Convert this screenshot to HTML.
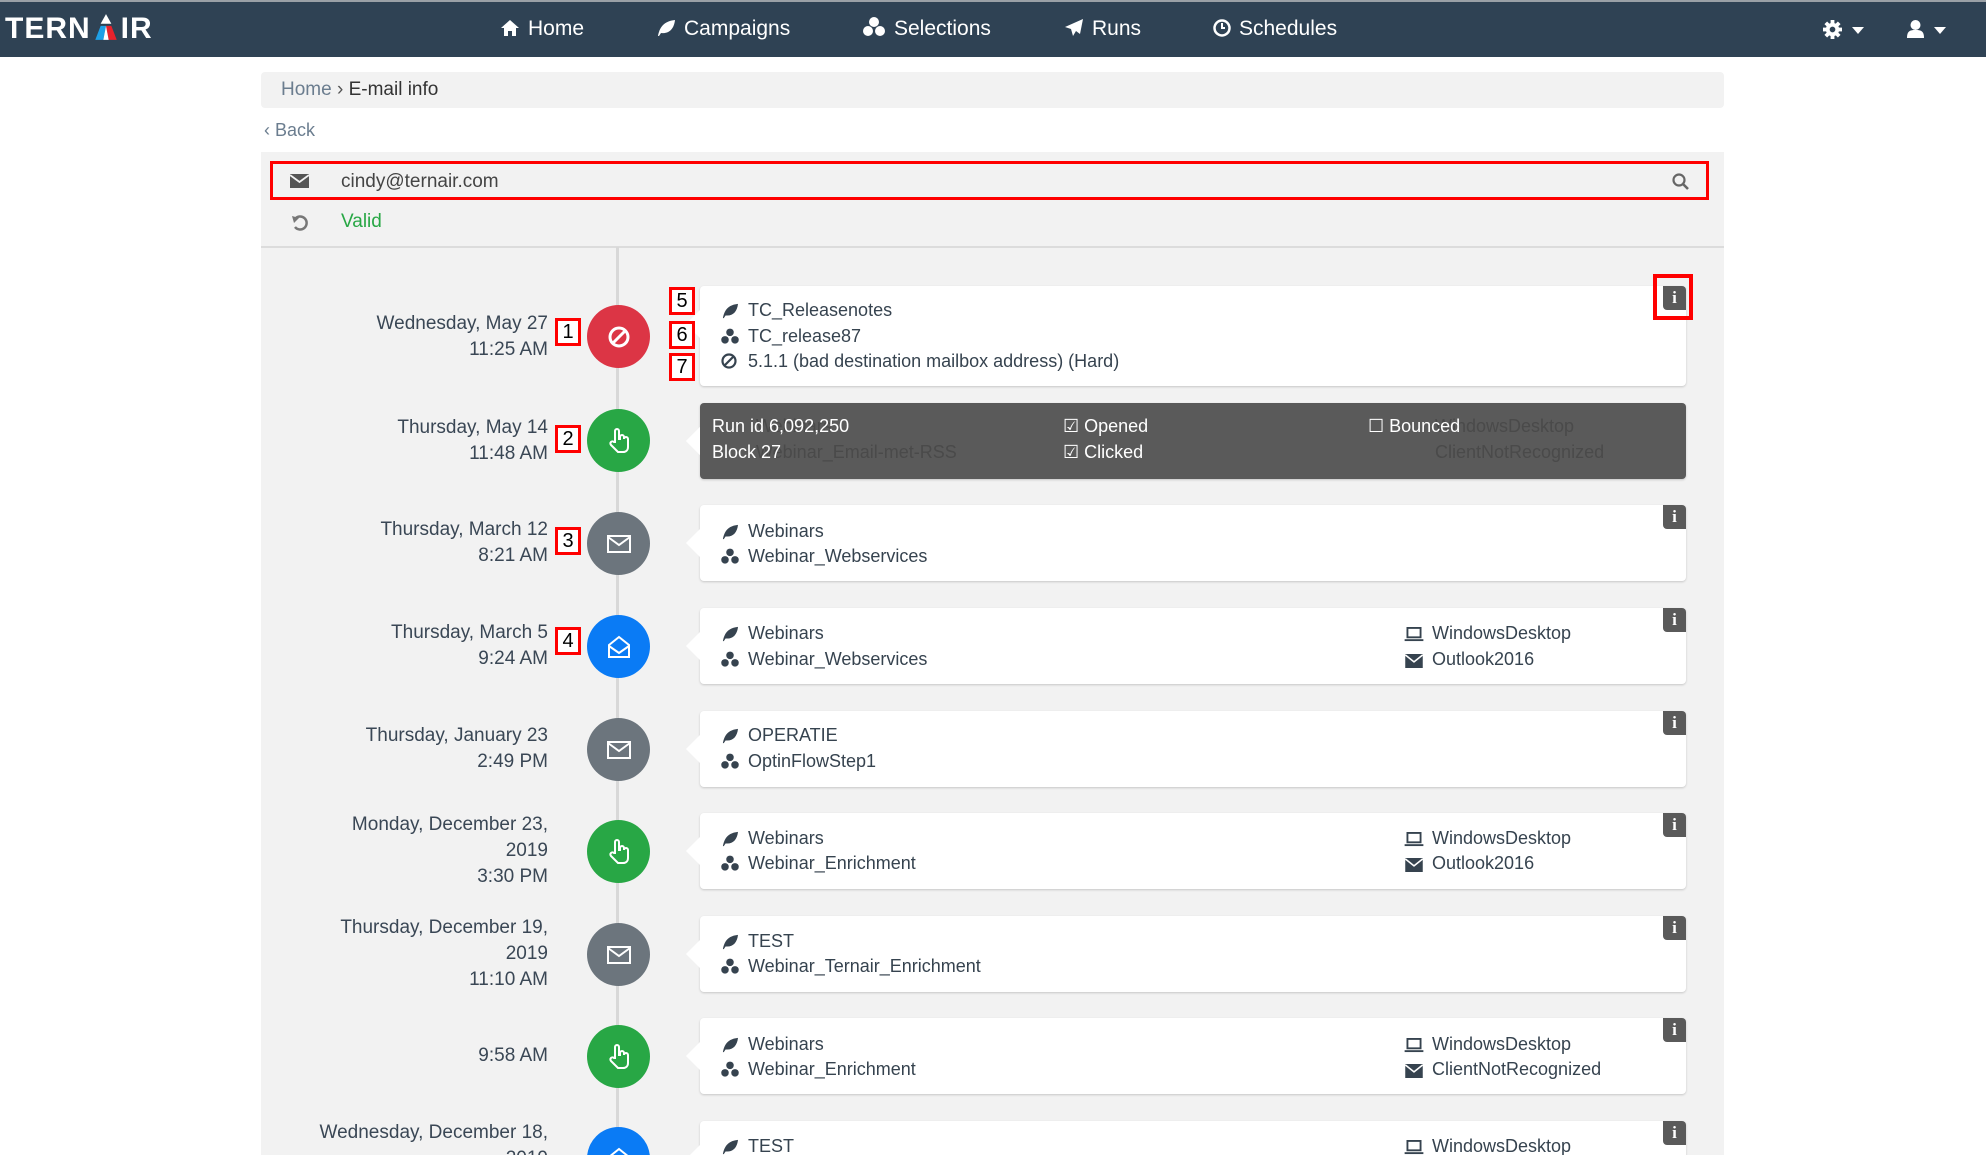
<!DOCTYPE html>
<html><head><meta charset="utf-8"><style>
*{box-sizing:border-box;margin:0;padding:0}
html,body{width:1986px;height:1155px;overflow:hidden}
body{background:#fff;font-family:"Liberation Sans",sans-serif;color:#36434f}
#w{position:relative;width:1986px;height:1155px;overflow:hidden}
.a{position:absolute}
.nav{left:0;top:0;width:1986px;height:57px;background:#2f4254;border-top:2px solid #9aa0a6}
.ni{top:17px;color:#fff;font-size:21px;line-height:24px;white-space:nowrap}
.ni svg{vertical-align:-2px;margin-right:8px}
.panel{left:261px;top:152px;width:1463px;height:1003px;background:#f2f2f2}
.vline{left:616px;top:247px;width:3px;height:908px;background:#d8d8d8}
.circ{width:63px;height:63px;border-radius:50%;left:587px;display:flex;align-items:center;justify-content:center}
.red{background:#dc3545}.grn{background:#28a745}.gry{background:#6c757d}.blu{background:#0a7bf5}
.card{left:700px;width:986px;height:76px;background:#fff;border-radius:4px;box-shadow:0 1px 2px rgba(0,0,0,.18)}
.card:before{content:"";position:absolute;left:-14px;top:24px;border-top:14px solid transparent;border-bottom:14px solid transparent;border-right:14px solid #fff}
.t{font-size:18px;line-height:22px;white-space:nowrap;color:#36434f}
.ic{display:inline-block;width:20px;margin-right:8px;text-align:center;vertical-align:-3px}
.info{width:23px;height:24px;background:#5a5a5a;border-radius:0 4px 0 4px;color:#fff;font-weight:bold;font-size:17px;text-align:center;line-height:24px;font-family:"Liberation Serif",serif}
.dt{right:1438px;text-align:right;font-size:19px;line-height:26px;color:#3a4755;white-space:nowrap}
.nb{width:26px;height:28px;border:3px solid #f00;background:#fff;color:#000;font-size:20px;line-height:22px;text-align:center;font-family:"Liberation Sans",sans-serif}
</style></head><body><div id="w">
<div class="a nav"></div>
<div class="a" style="left:5px;top:14px;color:#fff;font-weight:bold;font-size:30px;letter-spacing:1px;line-height:30px">TERN<svg width="30" height="26" viewBox="0 0 28 24" style="vertical-align:-2px"><polygon points="14,0 19,9 9,9" fill="#fff"/><polygon points="9,11 14,11 11.5,24 4,24" fill="#1ea0e6"/><polygon points="14,11 19,11 24,24 16.5,24" fill="#e8222c"/><polygon points="14,11 16.5,24 11.5,24" fill="#fff"/></svg>IR</div>
<div class="a ni" style="left:500px"><svg width="20" height="18" viewBox="0 0 20 18"><path d="M10 1 L19 9 H16 V17 H12 V12 H8 V17 H4 V9 H1 Z" fill="#fff"/></svg>Home</div>
<div class="a ni" style="left:656px"><svg width="20" height="18" viewBox="0 0 20 18"><path d="M2 17 C4 6 10 2 19 1 C18 10 13 15 5 14 L3 17 Z" fill="#fff"/></svg>Campaigns</div>
<div class="a ni" style="left:862px"><svg width="24" height="20" viewBox="0 0 24 20"><circle cx="12" cy="5" r="5" fill="#fff"/><circle cx="6" cy="14" r="5" fill="#fff"/><circle cx="18" cy="14" r="5" fill="#fff"/></svg>Selections</div>
<div class="a ni" style="left:1064px"><svg width="20" height="18" viewBox="0 0 20 18"><path d="M19 0 L1 8 L7 10 L9 17 L12 12 L16 15 Z" fill="#fff"/></svg>Runs</div>
<div class="a ni" style="left:1213px"><svg width="18" height="18" viewBox="0 0 18 18"><circle cx="9" cy="9" r="7.5" fill="none" stroke="#fff" stroke-width="2.5"/><path d="M9 4 V9 H12" stroke="#fff" stroke-width="2" fill="none"/></svg>Schedules</div>
<svg class="a" style="left:1823px;top:20px" width="19" height="19" viewBox="0 0 20 20"><g fill="#fff"><circle cx="10" cy="10" r="7"/><rect x="8" y="0" width="4" height="20"/><rect x="0" y="8" width="20" height="4"/><rect x="8" y="0" width="4" height="20" transform="rotate(45 10 10)"/><rect x="8" y="0" width="4" height="20" transform="rotate(-45 10 10)"/></g><circle cx="10" cy="10" r="3" fill="#2f4254"/></svg>
<svg class="a" style="left:1852px;top:27px" width="12" height="7"><polygon points="0,0 12,0 6,7" fill="#fff"/></svg>
<svg class="a" style="left:1907px;top:20px" width="17" height="18"><circle cx="8.5" cy="5" r="5" fill="#fff"/><path d="M0 18 C0 11 3 10 8.5 10 C14 10 17 11 17 18 Z" fill="#fff"/></svg>
<svg class="a" style="left:1934px;top:27px" width="12" height="7"><polygon points="0,0 12,0 6,7" fill="#fff"/></svg>

<div class="a" style="left:261px;top:72px;width:1463px;height:36px;background:#f2f2f2;border-radius:4px"></div>
<div class="a" style="left:281px;top:79px;font-size:19px;line-height:22px"><span style="color:#6b7d8f">Home</span> <span style="color:#555">›</span> <span style="color:#333">E-mail info</span></div>
<div class="a" style="left:264px;top:120px;font-size:18px;color:#6b7d8f">‹ Back</div>

<div class="a panel"></div>
<div class="a" style="left:270px;top:161px;width:1439px;height:39px;border:3px solid #f00"></div>
<svg class="a" style="left:290px;top:174px" width="19" height="14"><path d="M0 0 H19 V14 H0 Z" fill="#555"/><path d="M0 1 L9.5 8 L19 1" stroke="#f2f2f2" stroke-width="1.8" fill="none"/></svg>
<div class="a" style="left:341px;top:171px;font-size:19px;color:#444">cindy@ternair.com</div>
<svg class="a" style="left:1672px;top:173px" width="18" height="18"><circle cx="7" cy="7" r="5.5" fill="none" stroke="#666" stroke-width="2.2"/><path d="M11 11 L16 16" stroke="#666" stroke-width="2.6"/></svg>
<svg class="a" style="left:291px;top:214px" width="18" height="18"><path d="M4 5 A6.5 6.5 0 1 1 4 13" fill="none" stroke="#777" stroke-width="2.5"/><polygon points="1,2 8,4 3,9" fill="#777"/></svg>
<div class="a" style="left:341px;top:211px;font-size:19px;color:#28a745">Valid</div>
<div class="a" style="left:261px;top:246px;width:1463px;height:2px;background:#dcdcdc"></div>
<div class="a vline"></div>

<div class="a dt" style="top:311px">Wednesday, May 27<br>11:25 AM</div>
<div class="a circ red" style="top:305px"><svg width="24" height="24"><circle cx="12" cy="12" r="9" fill="none" stroke="#fff" stroke-width="3"/><path d="M6 18 L18 6" stroke="#fff" stroke-width="3"/></svg></div>
<div class="a card" style="top:286px;height:100px"></div>

<div class="a dt" style="top:415px">Thursday, May 14<br>11:48 AM</div>
<div class="a circ grn" style="top:409px"><svg width="24" height="26" viewBox="0 0 24 26"><path d="M8 14 V3 a2 2 0 0 1 4 0 V11 h1 v-2 a2 2 0 0 1 4 0 v2 a2 2 0 0 1 4 0 V19 c0 3 -2 5 -5 5 H11 L4 17 a2 2 0 0 1 3 -3 Z" fill="none" stroke="#fff" stroke-width="2"/></svg></div>
<div class="a card" style="top:403px;background:#5a5a5a"></div>
<div class="a" style="left:686px;top:427px;border-top:14px solid transparent;border-bottom:14px solid transparent;border-right:14px solid #fff"></div>
<div class="a t" style="left:728px;top:415px;color:#4a4a4a"><span class="ic"></span>Webinars</div>
<div class="a t" style="left:728px;top:441px;color:#4a4a4a"><span class="ic"></span>Webinar_Email-met-RSS</div>
<div class="a t" style="left:1435px;top:415px;color:#4a4a4a">WindowsDesktop</div>
<div class="a t" style="left:1435px;top:441px;color:#4a4a4a">ClientNotRecognized</div>
<div class="a t" style="left:712px;top:415px;color:#fff">Run id 6,092,250</div>
<div class="a t" style="left:712px;top:441px;color:#fff">Block 27</div>
<div class="a t" style="left:1063px;top:415px;color:#fff">☑ Opened</div>
<div class="a t" style="left:1063px;top:441px;color:#fff">☑ Clicked</div>
<div class="a t" style="left:1368px;top:415px;color:#fff">☐ Bounced</div>

<div class="a dt" style="top:517px">Thursday, March 12<br>8:21 AM</div>
<div class="a dt" style="top:620px">Thursday, March 5<br>9:24 AM</div>
<div class="a dt" style="top:723px">Thursday, January 23<br>2:49 PM</div>
<div class="a dt" style="top:812px">Monday, December 23,<br>2019<br>3:30 PM</div>
<div class="a dt" style="top:915px">Thursday, December 19,<br>2019<br>11:10 AM</div>
<div class="a dt" style="top:1043px">9:58 AM</div>
<div class="a dt" style="top:1120px">Wednesday, December 18,<br>2019</div>

<div class="a circ gry" style="top:512px"><svg width="24" height="18"><rect x="1" y="1" width="22" height="16" fill="none" stroke="#fff" stroke-width="2"/><path d="M1 2 L12 10 L23 2" fill="none" stroke="#fff" stroke-width="2"/></svg></div>
<div class="a circ blu" style="top:615px"><svg width="24" height="24"><path d="M2 10 L12 2 L22 10 V22 H2 Z" fill="none" stroke="#fff" stroke-width="2"/><path d="M2 11 L12 18 L22 11" fill="none" stroke="#fff" stroke-width="2"/></svg></div>
<div class="a circ gry" style="top:718px"><svg width="24" height="18"><rect x="1" y="1" width="22" height="16" fill="none" stroke="#fff" stroke-width="2"/><path d="M1 2 L12 10 L23 2" fill="none" stroke="#fff" stroke-width="2"/></svg></div>
<div class="a circ grn" style="top:820px"><svg width="24" height="26" viewBox="0 0 24 26"><path d="M8 14 V3 a2 2 0 0 1 4 0 V11 h1 v-2 a2 2 0 0 1 4 0 v2 a2 2 0 0 1 4 0 V19 c0 3 -2 5 -5 5 H11 L4 17 a2 2 0 0 1 3 -3 Z" fill="none" stroke="#fff" stroke-width="2"/></svg></div>
<div class="a circ gry" style="top:923px"><svg width="24" height="18"><rect x="1" y="1" width="22" height="16" fill="none" stroke="#fff" stroke-width="2"/><path d="M1 2 L12 10 L23 2" fill="none" stroke="#fff" stroke-width="2"/></svg></div>
<div class="a circ grn" style="top:1025px"><svg width="24" height="26" viewBox="0 0 24 26"><path d="M8 14 V3 a2 2 0 0 1 4 0 V11 h1 v-2 a2 2 0 0 1 4 0 v2 a2 2 0 0 1 4 0 V19 c0 3 -2 5 -5 5 H11 L4 17 a2 2 0 0 1 3 -3 Z" fill="none" stroke="#fff" stroke-width="2"/></svg></div>
<div class="a circ blu" style="top:1127px"><svg width="24" height="24"><path d="M2 10 L12 2 L22 10 V22 H2 Z" fill="none" stroke="#fff" stroke-width="2"/></svg></div>

<div class="a card" style="top:505px"></div>
<div class="a card" style="top:608px"></div>
<div class="a card" style="top:711px"></div>
<div class="a card" style="top:813px"></div>
<div class="a card" style="top:916px"></div>
<div class="a card" style="top:1018px"></div>
<div class="a card" style="top:1121px"></div>

<div class="a info" style="left:1663px;top:286px">i</div>
<div class="a info" style="left:1663px;top:505px">i</div>
<div class="a info" style="left:1663px;top:608px">i</div>
<div class="a info" style="left:1663px;top:711px">i</div>
<div class="a info" style="left:1663px;top:813px">i</div>
<div class="a info" style="left:1663px;top:916px">i</div>
<div class="a info" style="left:1663px;top:1018px">i</div>
<div class="a info" style="left:1663px;top:1121px">i</div>

<svg width="0" height="0" style="position:absolute"><defs>
<symbol id="leaf" viewBox="0 0 20 18"><path d="M2 17 C4 6 10 2 19 1 C18 10 13 15 5 14 L3 17 Z" fill="#36434f"/></symbol>
<symbol id="cub" viewBox="0 0 24 20"><circle cx="12" cy="5" r="4.5" fill="#36434f"/><circle cx="6" cy="14" r="4.5" fill="#36434f"/><circle cx="18" cy="14" r="4.5" fill="#36434f"/></symbol>
<symbol id="lap" viewBox="0 0 20 16"><rect x="3" y="1" width="14" height="10" fill="none" stroke="#36434f" stroke-width="2"/><rect x="0" y="13" width="20" height="2" fill="#36434f"/></symbol>
<symbol id="env" viewBox="0 0 20 16"><rect x="0" y="0" width="20" height="16" fill="#36434f"/><path d="M0 1 L10 9 L20 1" stroke="#fff" stroke-width="1.8" fill="none"/></symbol>
</defs></svg>

<div class="a t" style="left:720px;top:299px"><svg class="ic" width="18" height="16"><use href="#leaf"/></svg>TC_Releasenotes</div>
<div class="a t" style="left:720px;top:325px"><svg class="ic" width="20" height="17"><use href="#cub"/></svg>TC_release87</div>
<div class="a t" style="left:720px;top:350px"><svg class="ic" width="18" height="18"><circle cx="9" cy="9" r="6.5" fill="none" stroke="#36434f" stroke-width="2.2"/><path d="M5 13 L13 5" stroke="#36434f" stroke-width="2.2"/></svg>5.1.1 (bad destination mailbox address) (Hard)</div>

<div class="a t" style="left:720px;top:520px"><svg class="ic" width="18" height="16"><use href="#leaf"/></svg>Webinars</div>
<div class="a t" style="left:720px;top:545px"><svg class="ic" width="20" height="17"><use href="#cub"/></svg>Webinar_Webservices</div>

<div class="a t" style="left:720px;top:622px"><svg class="ic" width="18" height="16"><use href="#leaf"/></svg>Webinars</div>
<div class="a t" style="left:720px;top:648px"><svg class="ic" width="20" height="17"><use href="#cub"/></svg>Webinar_Webservices</div>
<div class="a t" style="left:1404px;top:622px"><svg class="ic" width="19" height="15"><use href="#lap"/></svg>WindowsDesktop</div>
<div class="a t" style="left:1404px;top:648px"><svg class="ic" width="18" height="14"><use href="#env"/></svg>Outlook2016</div>

<div class="a t" style="left:720px;top:724px"><svg class="ic" width="18" height="16"><use href="#leaf"/></svg>OPERATIE</div>
<div class="a t" style="left:720px;top:750px"><svg class="ic" width="20" height="17"><use href="#cub"/></svg>OptinFlowStep1</div>

<div class="a t" style="left:720px;top:827px"><svg class="ic" width="18" height="16"><use href="#leaf"/></svg>Webinars</div>
<div class="a t" style="left:720px;top:852px"><svg class="ic" width="20" height="17"><use href="#cub"/></svg>Webinar_Enrichment</div>
<div class="a t" style="left:1404px;top:827px"><svg class="ic" width="19" height="15"><use href="#lap"/></svg>WindowsDesktop</div>
<div class="a t" style="left:1404px;top:852px"><svg class="ic" width="18" height="14"><use href="#env"/></svg>Outlook2016</div>

<div class="a t" style="left:720px;top:930px"><svg class="ic" width="18" height="16"><use href="#leaf"/></svg>TEST</div>
<div class="a t" style="left:720px;top:955px"><svg class="ic" width="20" height="17"><use href="#cub"/></svg>Webinar_Ternair_Enrichment</div>

<div class="a t" style="left:720px;top:1033px"><svg class="ic" width="18" height="16"><use href="#leaf"/></svg>Webinars</div>
<div class="a t" style="left:720px;top:1058px"><svg class="ic" width="20" height="17"><use href="#cub"/></svg>Webinar_Enrichment</div>
<div class="a t" style="left:1404px;top:1033px"><svg class="ic" width="19" height="15"><use href="#lap"/></svg>WindowsDesktop</div>
<div class="a t" style="left:1404px;top:1058px"><svg class="ic" width="18" height="14"><use href="#env"/></svg>ClientNotRecognized</div>

<div class="a t" style="left:720px;top:1135px"><svg class="ic" width="18" height="16"><use href="#leaf"/></svg>TEST</div>
<div class="a t" style="left:1404px;top:1135px"><svg class="ic" width="19" height="15"><use href="#lap"/></svg>WindowsDesktop</div>

<div class="a nb" style="left:555px;top:318px">1</div>
<div class="a nb" style="left:555px;top:425px">2</div>
<div class="a nb" style="left:555px;top:527px">3</div>
<div class="a nb" style="left:555px;top:627px">4</div>
<div class="a nb" style="left:669px;top:287px">5</div>
<div class="a nb" style="left:669px;top:321px">6</div>
<div class="a nb" style="left:669px;top:353px">7</div>
<div class="a" style="left:1653px;top:274px;width:40px;height:46px;border:4px solid #f00"></div>
</div></body></html>
